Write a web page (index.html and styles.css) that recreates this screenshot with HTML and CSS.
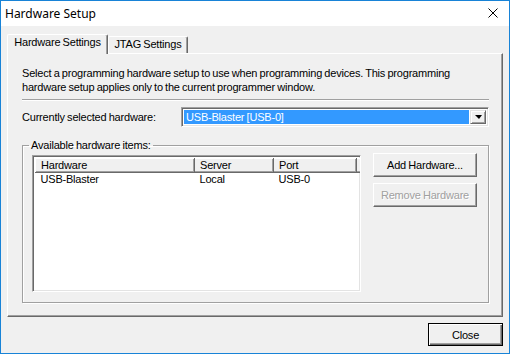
FILE: index.html
```html
<!DOCTYPE html>
<html lang="en">
<head>
  <meta charset="UTF-8" />
  <title>Hardware Setup</title>
  <link rel="stylesheet" href="styles.css">
</head>
<body>
  <div class="window">
    <div class="titlebar">
      <span class="title">Hardware Setup</span>
      <svg class="close-x" width="10" height="10" viewBox="0 0 10 10">
        <path d="M0.5 0.5 L9.5 9.5 M9.5 0.5 L0.5 9.5" stroke="#000" stroke-width="1" fill="none"/>
      </svg>
    </div>

    <div class="body">
      <div class="tabs">
        <div class="tab active">Hardware Settings</div>
        <div class="tab">JTAG Settings</div>
      </div>

      <div class="panel">
        <p class="intro">Select a programming hardware setup to use when programming devices. This programming hardware setup applies only to the current programmer window.</p>
        <hr class="sep">

        <div class="current">
          <label class="current-label">Currently selected hardware:</label>
          <div class="combo">
            <span class="combo-value">USB-Blaster [USB-0]</span>
            <span class="combo-btn"><span class="arrow"></span></span>
          </div>
        </div>

        <fieldset class="group">
          <legend>Available hardware items:</legend>
          <div class="group-body">
            <div class="listview">
              <table>
                <thead>
                  <tr>
                    <th class="col-hw">Hardware</th>
                    <th class="col-server">Server</th>
                    <th class="col-port">Port</th>
                    <th class="col-fill"></th>
                  </tr>
                </thead>
                <tbody>
                  <tr>
                    <td>USB-Blaster</td>
                    <td>Local</td>
                    <td>USB-0</td>
                    <td></td>
                  </tr>
                </tbody>
              </table>
            </div>
            <div class="side-buttons">
              <button class="btn">Add Hardware...</button>
              <button class="btn" disabled>Remove Hardware</button>
            </div>
          </div>
        </fieldset>
      </div>

      <div class="footer">
        <button class="btn default">Close</button>
      </div>
    </div>
  </div>
</body>
</html>
```

FILE: styles.css
```css
body {
  margin: 0;
  font-family: "Liberation Sans", Arial, sans-serif;
  font-size: 11px;
  letter-spacing: -0.2px;
  word-spacing: -0.6px;
  color: #000;
}
.window {
  width: 510px;
  height: 354px;
  box-sizing: border-box;
  border: 1px solid #1883d7;
  background: #f0f0f0;
}
.titlebar {
  height: 25px;
  background: #fff;
  display: flex;
  align-items: center;
  justify-content: space-between;
  padding: 0 11px 0 4px;
}
.title {
  font-family: "Noto Sans", sans-serif;
  font-size: 12px;
  letter-spacing: 0;
  word-spacing: 0;
  margin-top: -1px;
}
.close-x {
  display: block;
  margin-top: -2px;
}
.body {
  padding: 0 6px;
}
.tabs {
  display: flex;
  align-items: flex-end;
  margin-top: 8px;
  height: 19px;
}
.tab {
  box-sizing: border-box;
  height: 17px;
  line-height: 15px;
  text-align: center;
  background: #f0f0f0;
  border-top: 1px solid #fff;
  border-left: 1px solid #fff;
  border-right: 1px solid #696969;
  box-shadow: inset -1px 0 0 #a0a0a0;
  width: 80px;
  border-radius: 2px 2px 0 0;
}
.tab.active {
  position: relative;
  z-index: 1;
  width: 101px;
  height: 20px;
  margin-bottom: -1px;
  line-height: 14px;
}
.panel {
  box-sizing: border-box;
  height: 264px;
  border-top: 1px solid #fff;
  border-left: 1px solid #fff;
  border-right: 1px solid #696969;
  border-bottom: 1px solid #696969;
  box-shadow: inset -1px -1px 0 #a0a0a0;
  padding: 12px 13px 0 14px;
}
.intro {
  margin: 0;
  line-height: 14px;
}
.sep {
  margin: 5px 0 0;
  height: 0;
  border: 0;
  border-top: 1px solid #a0a0a0;
  border-bottom: 1px solid #fff;
}
.current {
  display: flex;
  align-items: center;
  margin-top: 6px;
}
.current-label {
  width: 159px;
}
.combo {
  flex: 1;
  box-sizing: border-box;
  height: 20px;
  display: flex;
  align-items: stretch;
  background: #fff;
  border-top: 1px solid #a0a0a0;
  border-left: 1px solid #a0a0a0;
  border-right: 1px solid #fff;
  border-bottom: 1px solid #fff;
  box-shadow: inset 1px 1px 0 #696969, inset -1px -1px 0 #e3e3e3;
  padding: 2px;
}
.combo-value {
  flex: 1;
  background: #3399ff;
  color: #fff;
  line-height: 14px;
  padding-left: 2px;
  margin-right: 1px;
}
.combo-btn {
  width: 16px;
  box-sizing: border-box;
  background: #f0f0f0;
  border-top: 1px solid #e3e3e3;
  border-left: 1px solid #e3e3e3;
  border-right: 1px solid #696969;
  border-bottom: 1px solid #696969;
  box-shadow: inset 1px 1px 0 #fff, inset -1px -1px 0 #a0a0a0;
  display: flex;
  align-items: center;
  justify-content: center;
}
.arrow {
  width: 0;
  height: 0;
  border-left: 4px solid transparent;
  border-right: 3px solid transparent;
  border-top: 4px solid #000;
}
.group {
  margin: 11px 0 0;
  padding: 1px 10px 10px 9px;
  border: 1px solid #a0a0a0;
  box-shadow: 1px 1px 0 #fff, inset 1px 1px 0 #fff;
  min-width: 0;
}
.group legend {
  padding: 0 2px;
  margin-left: -3px;
  line-height: 14px;
}
.group-body {
  display: flex;
  align-items: flex-start;
}
.listview {
  box-sizing: border-box;
  width: 329px;
  height: 137px;
  margin-top: 2px;
  background: #fff;
  border-top: 1px solid #a0a0a0;
  border-left: 1px solid #a0a0a0;
  border-right: 1px solid #fff;
  border-bottom: 1px solid #fff;
  box-shadow: inset 1px 1px 0 #696969, inset -1px -1px 0 #e3e3e3;
  padding: 2px 2px 0 2px;
  overflow: hidden;
}
.listview table {
  border-collapse: collapse;
  table-layout: fixed;
  width: 325px;
}
.listview th {
  box-sizing: border-box;
  height: 14px;
  padding: 0 0 0 5px;
  font-weight: normal;
  text-align: left;
  background: #f0f0f0;
  border-top: 1px solid #fff;
  border-left: 1px solid #fff;
  border-right: 1px solid #696969;
  border-bottom: 1px solid #696969;
  box-shadow: inset -1px -1px 0 #a0a0a0;
  line-height: 11px;
}
.listview .col-hw { width: 159px; }
.listview .col-server { width: 79px; }
.listview .col-port { width: 83px; }
.listview .col-fill {
  width: 4px;
  border-right: 0;
  box-shadow: inset 0 -1px 0 #a0a0a0;
  padding: 0;
}
.listview td {
  padding: 0 0 0 5px;
  line-height: 13px;
}
.side-buttons {
  display: flex;
  flex-direction: column;
  gap: 6px;
  margin-left: 12px;
}
.btn {
  box-sizing: border-box;
  width: 104px;
  height: 24px;
  padding: 0;
  font-family: "Liberation Sans", Arial, sans-serif;
  font-size: 11px;
  letter-spacing: -0.2px;
  word-spacing: -0.6px;
  color: #000;
  background: #f0f0f0;
  border-top: 1px solid #fff;
  border-left: 1px solid #fff;
  border-right: 1px solid #696969;
  border-bottom: 1px solid #696969;
  border-radius: 0;
  box-shadow: inset -1px -1px 0 #a0a0a0;
}
.btn:disabled {
  color: #a0a0a0;
  text-shadow: 1px 1px 0 #fff;
}
.footer {
  display: flex;
  justify-content: flex-end;
  margin-top: 6px;
}
.btn.default {
  width: 75px;
  height: 23px;
  border: 1px solid #000;
  box-shadow: inset 1px 1px 0 #fff, inset -1px -1px 0 #696969, inset -2px -2px 0 #a0a0a0;
}
```
